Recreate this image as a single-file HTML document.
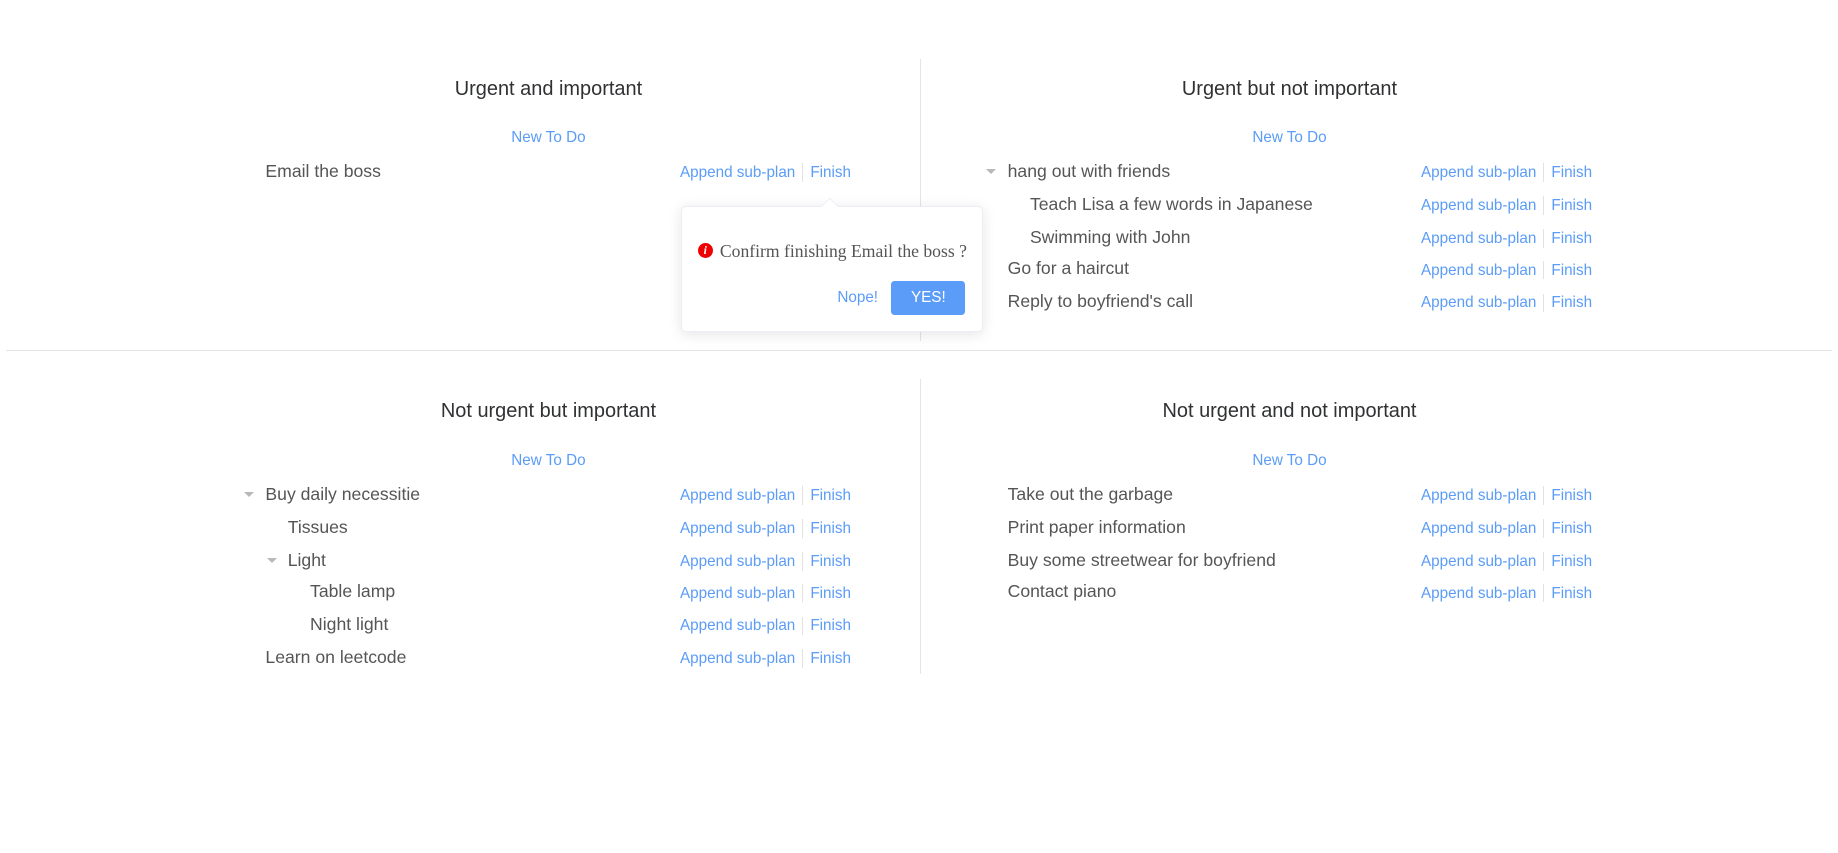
<!DOCTYPE html>
<html><head><meta charset="utf-8"><style>
html,body{margin:0;padding:0;background:#fff;overflow:hidden}
body{width:1838px;height:853px}
#w{zoom:1.1744;position:relative;width:1565px;height:727px;font-family:"Liberation Sans",Arial,sans-serif}
.a{position:absolute;white-space:nowrap}
.t{font-size:17px;color:#303133;transform:translateX(-50%)}
.n{font-size:13px;color:#5a9cf8;transform:translateX(-50%)}
.x{font-size:15px;color:#555;line-height:18px}
.l{font-size:13px;color:#5a9cf8;line-height:18px}
.s{position:absolute;width:1px;height:16px;background:#e2e2e2}
.ar{position:absolute;width:0;height:0;border-left:5px solid transparent;border-right:5px solid transparent;border-top:5px solid #b8b8b8}
</style></head><body><div id="w">
<div class="a" style="left:783px;top:50px;width:1px;height:240px;background:#e4e4e4"></div>
<div class="a" style="left:783px;top:323px;width:1px;height:251px;background:#e4e4e4"></div>
<div class="a" style="left:5px;top:298px;width:1555px;height:1px;background:#e4e4e4"></div>

<div class="a t" style="left:467px;top:66px">Urgent and important</div>
<div class="a t" style="left:1098px;top:66px">Urgent but not important</div>
<div class="a t" style="left:467px;top:341px">Not urgent but important</div>
<div class="a t" style="left:1098px;top:341px">Not urgent and not important</div>
<div class="a n" style="left:467px;top:110px">New To Do</div>
<div class="a n" style="left:1098px;top:110px">New To Do</div>
<div class="a n" style="left:467px;top:385px">New To Do</div>
<div class="a n" style="left:1098px;top:385px">New To Do</div>

<div id="rows"></div>

<div class="a" style="left:580px;top:175px;width:255px;height:106px;background:#fff;border:1px solid #ebeef5;border-radius:4px;box-shadow:0 2px 12px rgba(0,0,0,.1)"></div>
<div class="a" style="left:702px;top:170px;width:9px;height:9px;background:#fff;border-left:1px solid #ebeef5;border-top:1px solid #ebeef5;transform:rotate(45deg)"></div>
<div class="a" style="left:594px;top:207px;width:13px;height:13px;border-radius:50%;background:#e00;color:#fff;font:italic bold 10px 'Liberation Serif',serif;text-align:center;line-height:13px">i</div>
<div class="a" style="left:613px;top:205px;font:15px 'Liberation Serif',serif;color:#555">Confirm finishing Email the boss ?</div>
<div class="a" style="left:713px;top:246px;font-size:13px;color:#5a9cf8">Nope!</div>
<div class="a" style="left:759px;top:239px;width:63px;height:29px;background:#5a9cf8;border-radius:3px;color:#fff;font-size:13px;text-align:center;line-height:29px">YES!</div>
</div>
<script>
var R=[
[226,146,0,"Email the boss",579],
[858,146,1,"hang out with friends",1210],
[877,174,0,"Teach Lisa a few words in Japanese",1210],
[877,202,0,"Swimming with John",1210],
[858,229,0,"Go for a haircut",1210],
[858,257,0,"Reply to boyfriend's call",1210],
[226,421,1,"Buy daily necessitie",579],
[245,449,0,"Tissues",579],
[245,477,1,"Light",579],
[264,504,0,"Table lamp",579],
[264,532,0,"Night light",579],
[226,560,0,"Learn on leetcode",579],
[858,421,0,"Take out the garbage",1210],
[858,449,0,"Print paper information",1210],
[858,477,0,"Buy some streetwear for boyfriend",1210],
[858,504,0,"Contact piano",1210]];
var h="";
R.forEach(function(r){var y=r[1]-9;
if(r[2])h+='<div class="ar" style="left:'+(r[0]-18)+'px;top:'+(r[1]-2)+'px"></div>';
h+='<div class="a x" style="left:'+r[0]+'px;top:'+y+'px">'+r[3]+'</div>';
h+='<div class="a l" style="left:'+r[4]+'px;top:'+(y+1)+'px">Append sub-plan</div>';
h+='<div class="s" style="left:'+(r[4]+104)+'px;top:'+(y+2)+'px"></div>';
h+='<div class="a l" style="left:'+(r[4]+111)+'px;top:'+(y+1)+'px">Finish</div>';});
document.getElementById("rows").outerHTML=h;
</script>
</body></html>
